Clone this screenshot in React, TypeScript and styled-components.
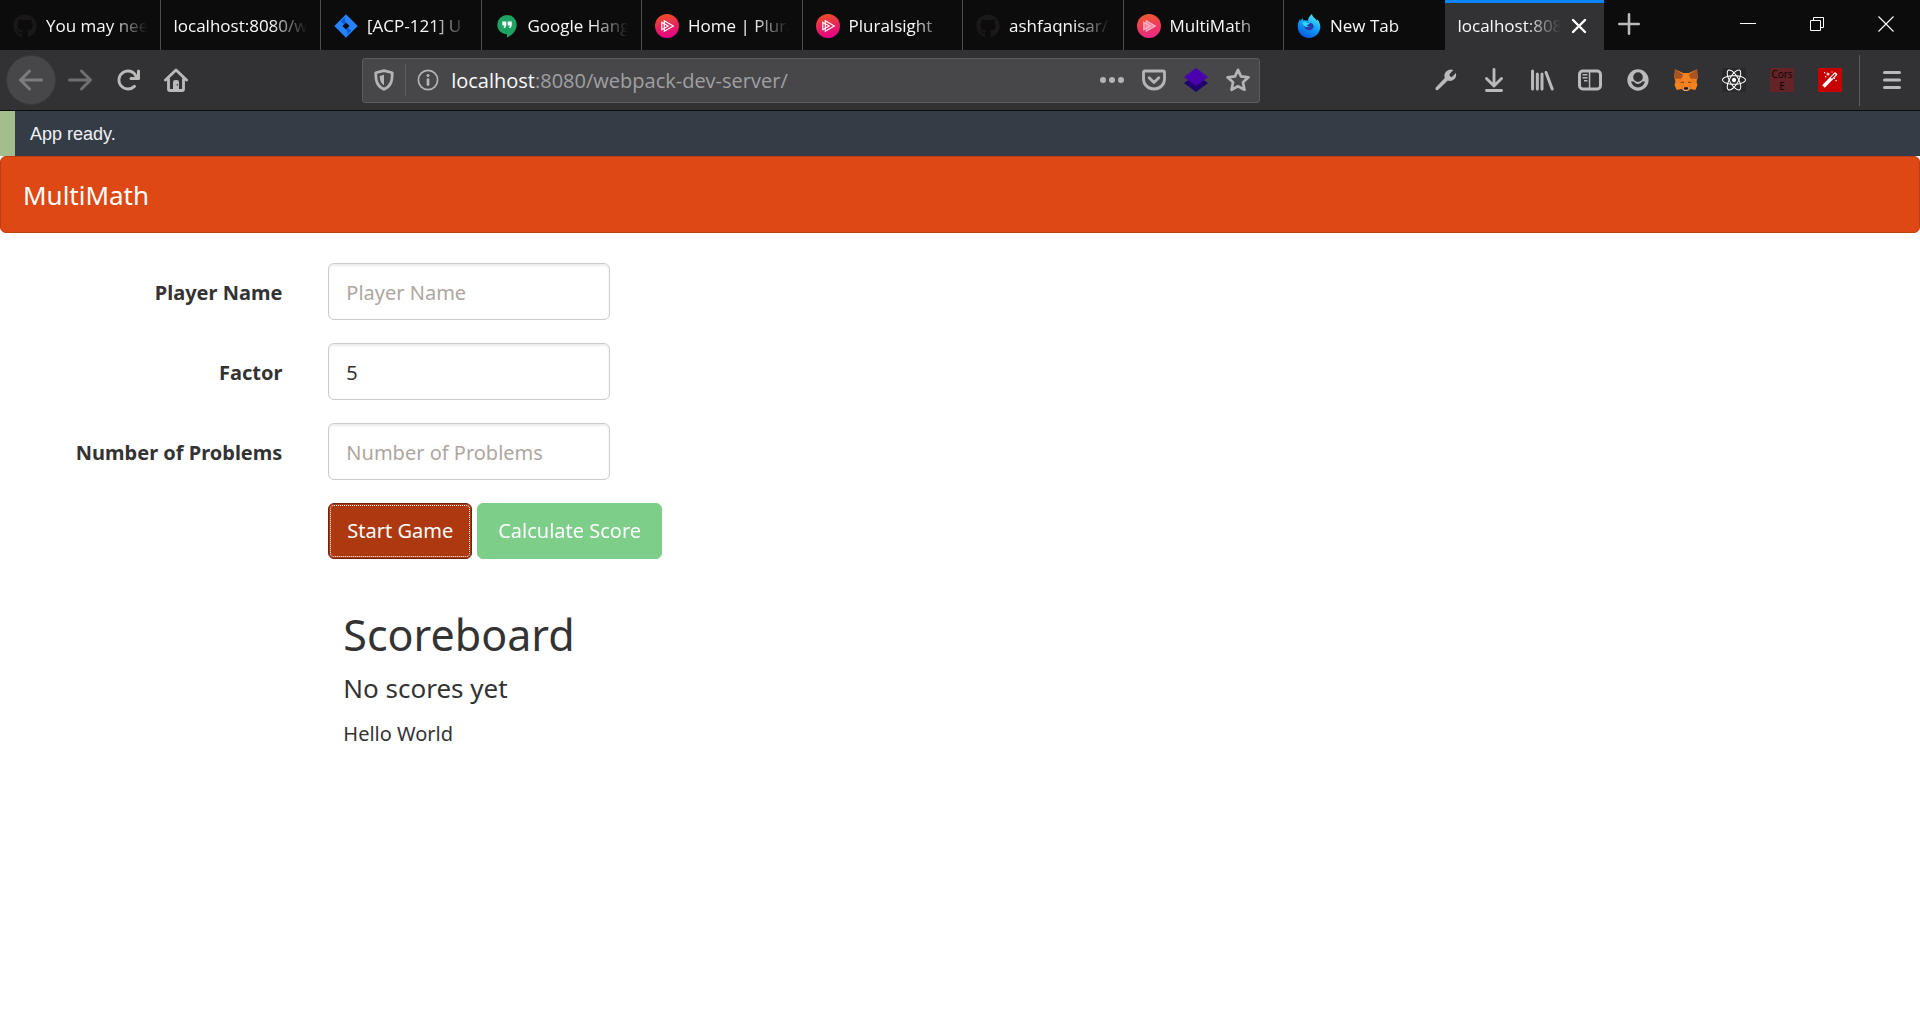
import React from "react";
import styled, { createGlobalStyle, css } from "styled-components";
import { FaGithub, FaReact } from "react-icons/fa";

const chromeFont = `"Open Sans", "Noto Sans", sans-serif`;
const pageFont = `"Noto Sans", "Open Sans", sans-serif`;

const GlobalStyle = createGlobalStyle`
  *, *::before, *::after { box-sizing: border-box; }
  body { margin: 0; background: #fff; color: #333; font-family: ${pageFont}; }
  button, input { font-family: inherit; margin: 0; }
  svg { display: block; flex: none; }
`;

/* ---------- browser chrome ---------- */

const TabStrip = styled.div`
  display: flex;
  height: 50px;
  background: #0c0c0d;
  font-family: ${chromeFont};
`;

const TabList = styled.div`
  display: flex;
  flex: 0 1 1605px;
  min-width: 0;
`;

const TabItem = styled.div<{ $active?: boolean; $last?: boolean }>`
  display: flex;
  flex: 1 1 0;
  align-items: center;
  min-width: 0;
  padding: 0 13px;
  border-right: 1px solid ${(p) => (p.$active || p.$last ? "transparent" : "#4e4e4f")};
  ${(p) =>
    p.$active &&
    css`
      background: #323234;
      background-clip: padding-box;
      box-shadow: inset 0 3px #0a84ff;
    `}
`;

const TabButton = styled.button`
  display: flex;
  flex: 1;
  align-items: center;
  gap: 9px;
  min-width: 0;
  height: 100%;
  padding: 2px 0 0;
  border: 0;
  background: none;
  color: #f9f9fa;
  text-align: left;
`;

const TabTitle = styled.span`
  flex: 1;
  overflow: hidden;
  font-size: 17px;
  line-height: 24px;
  white-space: nowrap;
  mask-image: linear-gradient(to left, transparent, #000 36px);
`;

const GlyphButton = styled.button<{ $width: number; $color?: string }>`
  display: flex;
  flex: none;
  align-items: center;
  justify-content: center;
  width: ${(p) => p.$width}px;
  height: 48px;
  padding: 0;
  border: 0;
  background: none;
  color: ${(p) => p.$color ?? "#bababb"};
`;

const CloseTab = styled(GlyphButton)`
  height: 50px;
  margin-left: 6px;
  padding-top: 2px;
`;

const WindowControls = styled.div`
  display: flex;
  margin-left: auto;
`;

const Toolbar = styled.div`
  display: flex;
  align-items: center;
  height: 61px;
  padding: 0 4px 0 6px;
  background: #323234;
  border-bottom: 1px solid #0c0c0d;
  font-family: ${chromeFont};
`;

const BackButton = styled(GlyphButton)`
  height: 50px;
  border: 1px solid #3a3a3c;
  border-radius: 50%;
  background: #474749;
`;

const Spacer = styled.div`
  flex: 18 1 0;
`;

const UrlBar = styled.div`
  display: flex;
  flex: 100 1 0;
  align-items: center;
  min-width: 0;
  height: 45px;
  margin: 0 1px;
  border: 1px solid #5b5b5d;
  border-radius: 3px;
  background: #474749;
`;

const UrlDivider = styled.span`
  width: 1px;
  height: 32px;
  background: #606062;
`;

const UrlText = styled.div`
  flex: 1;
  min-width: 0;
  overflow: hidden;
  color: #a0a0a2;
  font-size: 20px;
  line-height: 28px;
  padding: 2px 0 0 2px;
  white-space: nowrap;
`;

const UrlHost = styled.span`
  color: #f9f9fa;
`;

const MenuDivider = styled.span`
  width: 1px;
  height: 51px;
  margin: 0 8px 0 5px;
  background: #5c5c5e;
`;

const CorsBadge = styled.span`
  width: 24px;
  height: 24px;
  background: #632327;
  color: #0c0405;
  font-size: 10px;
  line-height: 12px;
  text-align: center;
`;

/* ---------- page ---------- */

const StatusBar = styled.div`
  padding: 13px 15px 11px;
  border-left: 15px solid #a3be8c;
  background: #343d46;
  color: #eff1f5;
  font-family: "Liberation Sans", Arial, sans-serif;
  font-size: 18px;
  line-height: 21px;
`;

const Navbar = styled.nav`
  display: flex;
  align-items: center;
  height: 77px;
  padding: 0 22px;
  margin-bottom: 30px;
  border: 1px solid #bf3e11;
  border-radius: 6px;
  background: #dd4814;
`;

const Brand = styled.a`
  color: #fff;
  font-size: 26px;
  line-height: 30px;
  text-decoration: none;
`;

const PageBody = styled.main`
  overflow-x: hidden;
`;

const Row = styled.div`
  display: grid;
  grid-template-columns: repeat(12, minmax(0, 1fr));
  margin: 0 -22px 23px;
`;

const Label = styled.label`
  grid-column: span 2;
  padding: 15px 23px 0;
  font-size: 20px;
  font-weight: 700;
  line-height: 30px;
  text-align: right;
  white-space: nowrap;
`;

const Field = styled.div`
  grid-column: span 2;
  padding: 0 23px;
`;

const TextInput = styled.input`
  display: block;
  width: 100%;
  height: 57px;
  padding: 13px 17px 11px;
  border: 1px solid #ccc;
  border-radius: 6px;
  background: #fff;
  box-shadow: inset 0 2px 2px rgba(0, 0, 0, 0.075);
  color: #333;
  font-size: 20px;
  line-height: 30px;
  outline: 0;
  &::placeholder {
    color: #aea79f;
    opacity: 1;
  }
`;

const Actions = styled.div`
  display: flex;
  grid-column: 3 / span 4;
  gap: 5px;
  padding: 0 23px;
`;

const ActionButton = styled.button<{ $tone: "start" | "success" }>`
  height: 56px;
  padding: 0 ${(p) => (p.$tone === "start" ? 18 : 20)}px;
  border: 1px solid ${(p) => (p.$tone === "start" ? "#6f240a" : "#38b44a")};
  border-radius: 6px;
  background: ${(p) => (p.$tone === "start" ? "#ae3910" : "#38b44a")};
  color: #fff;
  font-size: 20px;
  line-height: 30px;
  white-space: nowrap;
  ${(p) =>
    p.$tone === "start" &&
    css`
      outline: 1px dotted #fff;
      outline-offset: -3px;
    `}
  &:disabled {
    opacity: 0.65;
  }
`;

const Scoreboard = styled.section`
  grid-column: 3 / span 6;
  padding: 28px 38px 0;
`;

const ScoreTitle = styled.h2`
  margin: 0 0 13px;
  font-size: 43px;
  font-weight: 400;
  line-height: 50px;
`;

const ScoreNote = styled.h4`
  margin: 0 0 16px;
  font-size: 26px;
  font-weight: 400;
  line-height: 30px;
`;

const Greeting = styled.p`
  margin: 0;
  font-size: 20px;
  line-height: 30px;
`;

/* ---------- icons ---------- */

const Icon = ({ children, size = 24, box = "0 0 16 16" }: { children: React.ReactNode; size?: number; box?: string }) => (
  <svg width={size} height={size} viewBox={box} fill="currentColor" aria-hidden="true">
    {children}
  </svg>
);

const line = { fill: "none", stroke: "currentColor", strokeLinecap: "round", strokeLinejoin: "round" } as const;

const arrow =
  "M15 7H3.414l4.293-4.293a1 1 0 0 0-1.414-1.414l-6 6a1 1 0 0 0 0 1.414l6 6a1 1 0 0 0 1.414-1.414L3.414 9H15a1 1 0 0 0 0-2z";

const JiraIcon = () => (
  <Icon box="0 0 24 24">
    <path fill="#2684ff" fillRule="evenodd" d="M12 0.3 23.7 12 12 23.7 0.3 12zM12 8.4 8.4 12 12 15.6 15.6 12z" />
    <path fill="#0b5bd3" d="M12 8.4c-1.8-1.8-1.8-4.4-.2-6.2L6.6 7.4 10.2 10.2zM12 15.6c1.8 1.8 1.8 4.4.2 6.2l5.2-5.2-3.6-2.8z" />
  </Icon>
);

const HangoutsIcon = () => (
  <Icon box="0 0 24 24">
    <path fill="#1ea362" d="M12 1a9.7 9.7 0 0 0-9.7 9.7c0 5.2 4.3 9.5 9.7 9.5V23.5c5.4-2.3 9.7-7.3 9.7-12.8A9.7 9.7 0 0 0 12 1z" />
    <path fill="#fff" d="M7.3 7.500h4v4.200L10 14H8.600l1-2.500H7.300zM12.700 7.500h4v4.200l-1.300 2.300H14l1-2.500h-2.300z" />
  </Icon>
);

const PluralsightIcon = ({ id, soft }: { id: string; soft?: boolean }) => (
  <Icon box="0 0 24 24">
    <linearGradient id={id} x1="0.4" y1="0" x2="0.6" y2="1">
      <stop offset="0" stopColor={soft ? "#ee5b2e" : "#f04e23"} />
      <stop offset="0.55" stopColor={soft ? "#f0375c" : "#e6205f"} />
      <stop offset="1" stopColor={soft ? "#ea2a86" : "#ec008c"} />
    </linearGradient>
    <circle cx="12" cy="12" r="12" fill={`url(#${id})`} />
    <g fill={soft ? "#f9859f" : "none"} stroke={soft ? "#fbb5c8" : "#fff"} strokeWidth="1.2">
      <path d="M9.300 6.800v10.400L18.300 12z" />
      <path d="M6.800 8.200v7.600L13.200 12z" />
    </g>
  </Icon>
);

const FirefoxIcon = () => (
  <Icon box="0 0 24 24">
    <linearGradient id="fx-body" x1="0.8" y1="0" x2="0.3" y2="1">
      <stop offset="0" stopColor="#5cf4f4" />
      <stop offset="0.45" stopColor="#12a8fb" />
      <stop offset="1" stopColor="#0756e0" />
    </linearGradient>
    <path
      fill="url(#fx-body)"
      d="M15 0c.4 2.500 2 3.600 3.700 5.200.5.500.9 1 1.200 1.600l.5-1.200c1.800 2 2.900 4.600 2.900 7.200C23.300 19 18.300 24 12 24S.7 19 .7 12.800c0-2.800.7-5.400 2.300-7.900l.6 2.300L5.300 4l1.200 2.500c1.600-.5 3-.2 4.300.5.3-2.600 1.900-5.400 4.200-7z"
    />
    <path fill="#2b3aa8" d="M7.200 12c-1-2 .1-3.500 1.500-3.700 1.700-.2 2.400.8 4.300.7 2-.1 3.700 1.500 3.700 3.800a4.900 4.900 0 0 1-9.500-.8z" />
    <path fill="#2bd7fb" d="M5.300 8.400c1.600-1 3.700-.9 5.300.4l2.300.5c-.6 1.400-2.700 1.200-3.200 2.600.8.400 1.700.4 2.500.1-1 1.500-3.700 1.600-5 0-.9-1.100-1.200-2.400-1.900-3.600z" />
  </Icon>
);

const MetaMaskIcon = () => (
  <Icon box="0 0 24 24">
    <path fill="#f58220" d="M1 1.200 9.200 5h5.600L23 1.200l.7 8-1.200 4.600 1 3.200-2.200 5-4.800-1L14 23h-4l-2.500-2-4.800 1L.5 17l1-3.200L.3 9.200z" />
    <path fill="#a85422" d="M1 1.200 9.200 6.600 7.500 10.500 1.300 11 .5 8.600zM23 1.200l-8.200 5.400 1.700 3.900 6.200.5.800-2.400z" />
    <path fill="#e4761b" d="M7.500 10.500 1.500 13.800l4.500-.4zM16.500 10.500l6 3.300-4.500-.4zM8 17l3 4-4-1zM16 17l-3 4 4-1z" />
    <path fill="#763d16" d="m5.500 14.300 3.800-.9.700 1.900zM18.500 14.300l-3.800-.9-.7 1.900z" />
    <path fill="#d9c9bd" d="m9 19 1.300 3.500h3.400L15 19l-1.500 1h-3z" />
    <path fill="#161616" d="M10.200 19.300h3.600l.4 1.700-1 .8h-2.400l-1-.8z" />
  </Icon>
);

const WandIcon = () => (
  <Icon box="0 0 24 24">
    <rect width="24" height="24" rx="1" fill="#c80000" />
    <path stroke="#fff" strokeWidth="3.600" d="M5.500 18.500 18.300 5.200" />
    <path stroke="#c80000" strokeWidth="1.300" d="m13.500 10.200 3.700-3.900" />
    <path fill="#fff" d="m10 4 .6 1.500 1.600.6-1.600.6L10 8.200l-.6-1.500-1.600-.6 1.600-.6zM6 4h1.200v1.200H6zM13.500 3.500h1v1h-1zM7 8h1.200v1.200H7zM17.500 12h1.300v1.300h-1.300zM16 10h1v1h-1z" />
  </Icon>
);

type TabInfo = { title: string; icon?: React.ReactNode };

const tabs: TabInfo[] = [
  { title: "You may need", icon: <FaGithub size={24} color="#1b1819" /> },
  { title: "localhost:8080/w" },
  { title: "[ACP-121] U", icon: <JiraIcon /> },
  { title: "Google Hang", icon: <HangoutsIcon /> },
  { title: "Home | Plura", icon: <PluralsightIcon id="ps-home" /> },
  { title: "Pluralsight", icon: <PluralsightIcon id="ps-main" /> },
  { title: "ashfaqnisar/", icon: <FaGithub size={24} color="#1b1819" /> },
  { title: "MultiMath", icon: <PluralsightIcon id="ps-math" soft /> },
  { title: "New Tab", icon: <FirefoxIcon /> },
];

const extensions: { label: string; icon: React.ReactNode }[] = [
  {
    label: "Developer tools",
    icon: (
      <Icon>
        <path d="M14.600 3.300 12.300 5.600a1.100 1.100 0 0 1-1.600-.1 1.200 1.200 0 0 1-.1-1.700l2.300-2.400a4.200 4.200 0 0 0-5.700 5.200L1.300 12.900a1 1 0 0 0 1.500 1.600L9.200 8.400a4.200 4.200 0 0 0 5.400-5.100z" />
      </Icon>
    ),
  },
  {
    label: "Downloads",
    icon: (
      <Icon>
        <path {...line} strokeWidth="1.900" d="M8 1v10.500M3 7l5 5 5-5" />
        <path {...line} strokeWidth="1.900" d="M3 15h10" />
      </Icon>
    ),
  },
  {
    label: "Library",
    icon: (
      <Icon>
        <path {...line} strokeWidth="2" d="M1.700 2v12M4.900 4v10M8 4v10M10.700 3l4.100 11" />
      </Icon>
    ),
  },
  {
    label: "Sidebars",
    icon: (
      <Icon>
        <rect x="1" y="2" width="14" height="12" rx="2.200" fill="none" stroke="currentColor" strokeWidth="2" />
        <path stroke="currentColor" strokeWidth="1" d="M7.700 2v12M3 4.500h3.300M3 6.500h3.300M4 8.500h2.300" />
      </Icon>
    ),
  },
  {
    label: "Account",
    icon: (
      <Icon>
        <path fillRule="evenodd" d="M8 .900a7.100 7.100 0 1 0 0 14.200A7.100 7.100 0 0 0 8 .900zm0 2a3.200 3.200 0 1 1 0 6.400 3.200 3.200 0 0 1 0-6.400zM3.300 9h1.900c1.400 2.200 4.200 2.200 5.600 0h1.900c-.8 2.600-2.500 4-4.700 4S4.100 11.600 3.300 9z" />
      </Icon>
    ),
  },
  { label: "MetaMask", icon: <MetaMaskIcon /> },
  { label: "React Developer Tools", icon: <FaReact size={24} color="#fff" style={{ background: "#29292b" }} /> },
  { label: "Cors E", icon: <CorsBadge>Cors E</CorsBadge> },
  { label: "Wand", icon: <WandIcon /> },
];

const BrowserChrome = () => (
  <header>
    <TabStrip>
      <TabList>
        {tabs.map((tab, i) => (
          <TabItem key={i} $last={i === tabs.length - 1}>
            <TabButton type="button">
              {tab.icon}
              <TabTitle>{tab.title}</TabTitle>
            </TabButton>
          </TabItem>
        ))}
        <TabItem $active>
          <TabButton type="button">
            <TabTitle>localhost:808</TabTitle>
          </TabButton>
          <CloseTab type="button" $width={24} $color="#fff" aria-label="Close tab">
            <Icon size={16}>
              <path {...line} strokeWidth="2.400" d="m2 2 12 12M14 2 2 14" />
            </Icon>
          </CloseTab>
        </TabItem>
      </TabList>
      <GlyphButton type="button" $width={48} aria-label="New tab">
        <Icon>
          <path {...line} strokeWidth="1.700" d="M8 1.500v13M1.500 8h13" />
        </Icon>
      </GlyphButton>
      <WindowControls>
        <GlyphButton type="button" $width={69} $color="#fff" aria-label="Minimize">
          <Icon size={16}>
            <path d="M0 7h16v1H0z" />
          </Icon>
        </GlyphButton>
        <GlyphButton type="button" $width={69} $color="#fff" aria-label="Restore">
          <Icon size={16}>
            <path fill="none" stroke="currentColor" d="M1.500 4.500h10v10h-10zM4.500 4V1.500h10v10H12" />
          </Icon>
        </GlyphButton>
        <GlyphButton type="button" $width={69} $color="#fff" aria-label="Close window">
          <Icon size={16}>
            <path fill="none" stroke="currentColor" strokeWidth="1.100" d="m.5.500 15 15M15.500.500l-15 15" />
          </Icon>
        </GlyphButton>
      </WindowControls>
    </TabStrip>
    <Toolbar>
      <BackButton type="button" $width={50} $color="#7c7c7e" aria-label="Back">
        <Icon>
          <path d={arrow} />
        </Icon>
      </BackButton>
      <GlyphButton type="button" $width={48} $color="#6f6f71" aria-label="Forward">
        <Icon>
          <path transform="matrix(-1 0 0 1 16 0)" d={arrow} />
        </Icon>
      </GlyphButton>
      <GlyphButton type="button" $width={48} aria-label="Reload">
        <Icon>
          <path d="M15 1a1 1 0 0 0-1 1v2.418A6.995 6.995 0 1 0 8 15a6.954 6.954 0 0 0 4.950-2.050 1 1 0 0 0-1.414-1.414A5.019 5.019 0 1 1 12.549 6H10a1 1 0 0 0 0 2h5a1 1 0 0 0 1-1V2a1 1 0 0 0-1-1z" />
        </Icon>
      </GlyphButton>
      <GlyphButton type="button" $width={48} aria-label="Home">
        <Icon>
          <path {...line} strokeWidth="1.900" d="M1 8l7-6.700L15 8M3 7.500V14a1 1 0 0 0 1 1h8a1 1 0 0 0 1-1V7.500" />
          <path fillRule="evenodd" d="M6 15V9.500A1.500 1.500 0 0 1 7.500 8h1A1.500 1.500 0 0 1 10 9.500V15zm2.500-4.300v1h.8v-1z" />
        </Icon>
      </GlyphButton>
      <Spacer />
      <UrlBar>
        <GlyphButton type="button" $width={42} $color="#b4b4b5" aria-label="Tracking protection">
          <Icon size={22}>
            <path fill="none" stroke="currentColor" strokeWidth="2" strokeLinejoin="round" d="M8 1.200 14 2.700C14 9 13 12.500 8 14.800 3 12.500 2 9 2 2.700z" />
            <path d="M8 4.200v7.600C5.500 10.200 5 8 4.900 5z" />
          </Icon>
        </GlyphButton>
        <UrlDivider />
        <GlyphButton type="button" $width={43} $color="#b4b4b5" aria-label="Site information">
          <Icon size={22}>
            <circle cx="8" cy="8" r="7" fill="none" stroke="currentColor" strokeWidth="1.200" />
            <circle cx="8" cy="4.700" r="1.100" />
            <path {...line} strokeWidth="2" d="M8 7.700v3.600" />
          </Icon>
        </GlyphButton>
        <UrlText>
          <UrlHost>localhost</UrlHost>:8080/webpack-dev-server/
        </UrlText>
        <GlyphButton type="button" $width={42} $color="#b4b4b5" aria-label="Page actions">
          <Icon>
            <circle cx="2" cy="8" r="2" />
            <circle cx="8" cy="8" r="2" />
            <circle cx="14" cy="8" r="2" />
          </Icon>
        </GlyphButton>
        <GlyphButton type="button" $width={42} $color="#b4b4b5" aria-label="Save to Pocket">
          <Icon>
            <path {...line} strokeWidth="1.900" d="M2 2h12a1 1 0 0 1 1 1v4.500a7 6.500 0 0 1-14 0V3a1 1 0 0 1 1-1zM4.800 6.500 8 9.600l3.200-3.100" />
          </Icon>
        </GlyphButton>
        <GlyphButton type="button" $width={42} aria-label="Layers">
          <Icon>
            <path fill="#20006e" d="M0 10 8 4.500 16 10 8 16z" />
            <path fill="#4a00ad" d="M0 6 8 0l8 6-8 6z" />
          </Icon>
        </GlyphButton>
        <GlyphButton type="button" $width={42} $color="#b4b4b5" aria-label="Bookmark">
          <Icon>
            <path {...line} strokeWidth="1.800" d="M8 1.200l2 4.400 5 .6-3.700 3.300 1 5L8 12.200l-4.300 2.300 1-5L1 6.200l5-.6z" />
          </Icon>
        </GlyphButton>
      </UrlBar>
      <Spacer />
      {extensions.map((item) => (
        <GlyphButton key={item.label} type="button" $width={48} aria-label={item.label}>
          {item.icon}
        </GlyphButton>
      ))}
      <MenuDivider />
      <GlyphButton type="button" $width={48} aria-label="Menu">
        <Icon>
          <path {...line} strokeWidth="2" d="M3 3h10M3 8h10M3 13h10" />
        </Icon>
      </GlyphButton>
    </Toolbar>
  </header>
);

export default function App() {
  return (
    <>
      <GlobalStyle />
      <BrowserChrome />
      <StatusBar role="status">App ready.</StatusBar>
      <PageBody>
        <Navbar>
          <Brand href="#">MultiMath</Brand>
        </Navbar>
        <form onSubmit={(e) => e.preventDefault()}>
          <Row>
            <Label htmlFor="player">Player Name</Label>
            <Field>
              <TextInput id="player" type="text" placeholder="Player Name" />
            </Field>
          </Row>
          <Row>
            <Label htmlFor="factor">Factor</Label>
            <Field>
              <TextInput id="factor" type="text" defaultValue="5" />
            </Field>
          </Row>
          <Row>
            <Label htmlFor="problems">Number of Problems</Label>
            <Field>
              <TextInput id="problems" type="text" placeholder="Number of Problems" />
            </Field>
          </Row>
          <Row>
            <Actions>
              <ActionButton type="submit" $tone="start">
                Start Game
              </ActionButton>
              <ActionButton type="button" $tone="success" disabled>
                Calculate Score
              </ActionButton>
            </Actions>
          </Row>
        </form>
        <Row>
          <Scoreboard>
            <ScoreTitle>Scoreboard</ScoreTitle>
            <ScoreNote>No scores yet</ScoreNote>
            <Greeting>Hello World</Greeting>
          </Scoreboard>
        </Row>
      </PageBody>
    </>
  );
}
